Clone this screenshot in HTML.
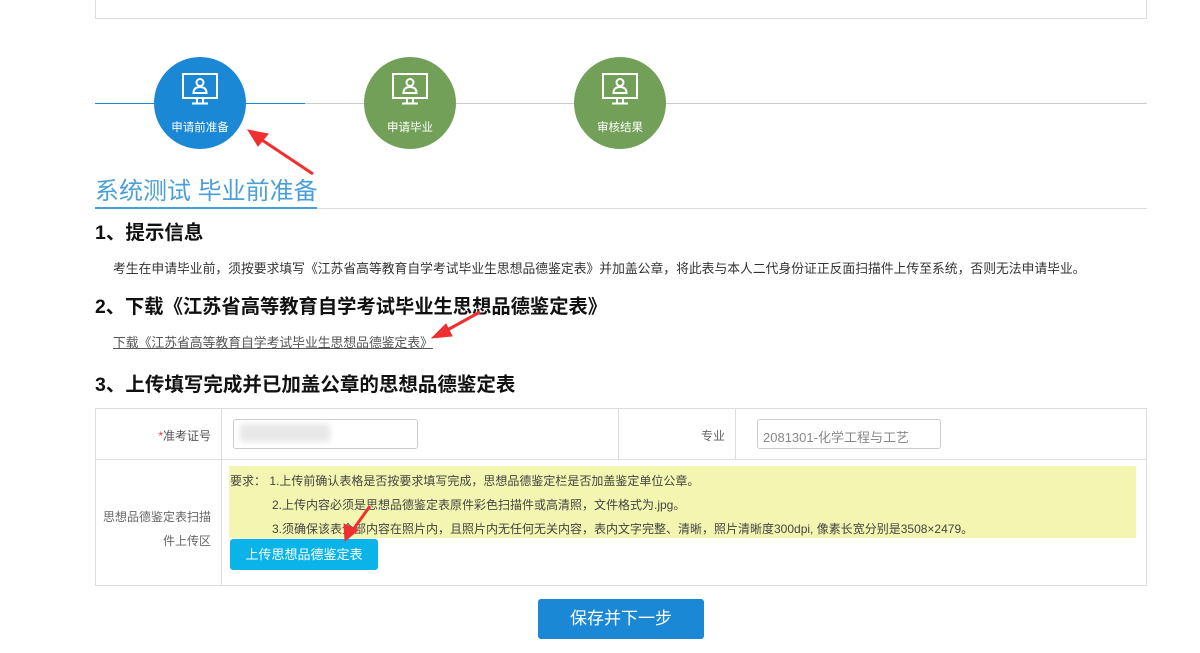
<!DOCTYPE html>
<html><head><meta charset="utf-8"><style>
*{margin:0;padding:0;box-sizing:border-box}
body{width:1200px;height:653px;background:#fff;position:relative;overflow:hidden;font-family:"Liberation Sans","Noto Sans CJK SC",sans-serif;color:#222}
.a{position:absolute}
.circ{position:absolute;width:92px;height:92px;border-radius:50%;color:#fff;font-size:11.5px;text-align:center}
.circ span{position:absolute;left:0;right:0;top:62px}
.circ svg{position:absolute;left:27px;top:15px}
h3{position:absolute;left:95px;font-weight:bold;color:#111;white-space:nowrap}
.p{font-size:12.8px;color:#333;white-space:nowrap}
.yl{font-size:12px;color:#444;white-space:nowrap;position:absolute}
</style></head><body>
<div class="a" style="left:95px;top:-2px;width:1052px;height:21px;border:1px solid #ddd;border-top:none"></div>
<div class="a" style="left:95px;top:103px;width:210px;height:1px;background:#1a88d4"></div>
<div class="a" style="left:305px;top:103px;width:842px;height:1px;background:#ccc"></div>

<div class="circ" style="left:154px;top:57px;background:#1a88d4">
<svg width="38" height="34" viewBox="0 0 38 34" fill="none" stroke="#fff" stroke-width="2"><rect x="2" y="2" width="34" height="24"/><circle cx="19" cy="10.5" r="3.5"/><path d="M12.5 21c0-4.5 3-6 6.5-6s6.5 1.5 6.5 6z"/><path d="M16 26v5M22 26v5M11 31.5h16"/></svg>
<span>申请前准备</span></div>
<div class="circ" style="left:364px;top:57px;background:#72a058">
<svg width="38" height="34" viewBox="0 0 38 34" fill="none" stroke="#fff" stroke-width="2"><rect x="2" y="2" width="34" height="24"/><circle cx="19" cy="10.5" r="3.5"/><path d="M12.5 21c0-4.5 3-6 6.5-6s6.5 1.5 6.5 6z"/><path d="M16 26v5M22 26v5M11 31.5h16"/></svg>
<span>申请毕业</span></div>
<div class="circ" style="left:574px;top:57px;background:#72a058">
<svg width="38" height="34" viewBox="0 0 38 34" fill="none" stroke="#fff" stroke-width="2"><rect x="2" y="2" width="34" height="24"/><circle cx="19" cy="10.5" r="3.5"/><path d="M12.5 21c0-4.5 3-6 6.5-6s6.5 1.5 6.5 6z"/><path d="M16 26v5M22 26v5M11 31.5h16"/></svg>
<span>审核结果</span></div>

<div class="a" style="left:95px;top:171px;font-size:24px;color:#4a9fd8;white-space:nowrap">系统测试 毕业前准备</div>
<div class="a" style="left:95px;top:208px;width:1052px;height:1px;background:#ddd"></div>
<div class="a" style="left:95px;top:207px;width:222px;height:2px;background:#4a9fd8"></div>

<h3 style="top:216px;font-size:19.5px">1、提示信息</h3>
<div class="a p" style="left:113px;top:258px">考生在申请毕业前，须按要求填写《江苏省高等教育自学考试毕业生思想品德鉴定表》并加盖公章，将此表与本人二代身份证正反面扫描件上传至系统，否则无法申请毕业。</div>
<h3 style="top:291px;font-size:19.3px">2、下载《江苏省高等教育自学考试毕业生思想品德鉴定表》</h3>
<div class="a p" style="left:113px;top:332px;color:#555;text-decoration:underline">下载《江苏省高等教育自学考试毕业生思想品德鉴定表》</div>
<h3 style="top:368px;font-size:19.5px">3、上传填写完成并已加盖公章的思想品德鉴定表</h3>

<div class="a" style="left:95px;top:408px;width:1052px;height:178px;border:1px solid #ddd"></div>
<div class="a" style="left:95px;top:459px;width:1052px;height:1px;background:#ddd"></div>
<div class="a" style="left:221px;top:408px;width:1px;height:178px;background:#ddd"></div>
<div class="a" style="left:618px;top:408px;width:1px;height:52px;background:#ddd"></div>
<div class="a" style="left:735px;top:408px;width:1px;height:52px;background:#ddd"></div>
<div class="a p" style="left:100px;top:427px;width:111px;text-align:right;color:#555;font-size:12px"><span style="color:#e33">*</span>准考证号</div>
<div class="a" style="left:233px;top:419px;width:185px;height:30px;border:1px solid #ccc;border-radius:3px"></div>
<div class="a" style="left:240px;top:424px;width:90px;height:18px;background:#e8e8e8;filter:blur(3px)"></div>
<div class="a p" style="left:640px;top:427px;width:85px;text-align:right;color:#666;font-size:12px">专业</div>
<div class="a" style="left:757px;top:419px;width:184px;height:30px;border:1px solid #ccc;border-radius:3px;font-size:13px;color:#888;padding:7px 0 0 5px;white-space:nowrap">2081301-化学工程与工艺</div>
<div class="a p" style="left:100px;top:505px;width:111px;text-align:right;color:#666;line-height:24px;white-space:normal;font-size:12px">思想品德鉴定表扫描件上传区</div>

<div class="a" style="left:229px;top:466px;width:907px;height:72px;background:#f2f6b0"></div>
<div class="yl" style="left:230px;top:472px">要求： 1.上传前确认表格是否按要求填写完成，思想品德鉴定栏是否加盖鉴定单位公章。</div>
<div class="yl" style="left:272px;top:496px">2.上传内容必须是思想品德鉴定表原件彩色扫描件或高清照，文件格式为.jpg。</div>
<div class="yl" style="left:272px;top:520px">3.须确保该表全部内容在照片内，且照片内无任何无关内容，表内文字完整、清晰，照片清晰度300dpi, 像素长宽分别是3508×2479。</div>
<div class="a" style="left:230px;top:539px;width:148px;height:31px;background:#0ab4e8;border-radius:3px;color:#fff;font-size:13px;text-align:center;line-height:31px">上传思想品德鉴定表</div>

<div class="a" style="left:538px;top:599px;width:166px;height:40px;background:#1a88d4;border-radius:3px;color:#fff;font-size:17px;text-align:center;line-height:40px">保存并下一步</div>

<svg class="a" style="left:0;top:0" width="1200" height="653">
<g stroke="#f03030" fill="#f03030">
<line x1="313" y1="174" x2="256" y2="136" stroke-width="3"/>
<polygon points="248,130 268,134 258,146"/>
<line x1="480" y1="312" x2="440" y2="334" stroke-width="3"/>
<polygon points="432,338 446,324 452,336"/>
<line x1="370" y1="506" x2="350" y2="534" stroke-width="3"/>
<polygon points="345,541 344,524 358,530"/>
</g></svg>
</body></html>
